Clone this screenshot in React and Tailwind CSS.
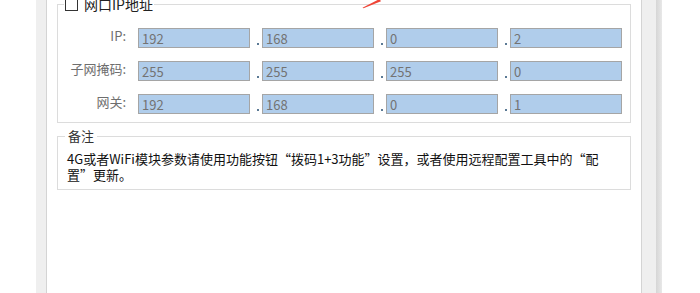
import React from "react";

const FONT = { fontFamily: '"Noto Sans CJK SC", "Noto Sans", sans-serif' };

function Row({ label, values }) {
  return (
    <div className="flex items-start h-[20px]">
      <div className="w-[68px] text-right text-[13px] leading-[14px] text-[#6e6e6e] pt-[1px]">{label}</div>
      <div className="ml-[12px] flex">
        {values.map((v, i) => (
          <React.Fragment key={i}>
            {i > 0 && (
              <div className="w-[12px] h-[20px] flex items-end justify-end pr-[3px] pb-[3px]">
                <div className="w-[2px] h-[2px] bg-[#5b7a95]" />
              </div>
            )}
            <div className="w-[112px] h-[20px] border border-[#a5a5a5] bg-[#b0cdeb] text-[#737373] text-[13px] leading-none pl-[3px] flex items-center">
              {v}
            </div>
          </React.Fragment>
        ))}
      </div>
    </div>
  );
}

export default function App() {
  return (
    <div className="relative flex w-[700px] h-[293px] bg-white overflow-hidden" style={FONT}>
      <div className="w-[36px] bg-white" />
      <div className="w-[10px] bg-[#efefef]" />
      <div className="w-[596px] border-l border-r border-[#d4d4d4] bg-white px-[10px]">
        <div className="relative mt-[4px] h-[119px] border border-[#dcdcdc] pt-[23px] flex flex-col gap-[13px]">
          <div className="absolute left-[6px] top-[-9px] flex items-center gap-[6px] bg-white px-[1px] h-[16px]">
            <div className="w-[13px] h-[13px] border border-[#333333] bg-white" />
            <span className="text-[14px] leading-[16px] text-[#222222]">网口IP地址</span>
          </div>
          <Row label="IP:" values={["192", "168", "0", "2"]} />
          <Row label="子网掩码:" values={["255", "255", "255", "0"]} />
          <Row label="网关:" values={["192", "168", "0", "1"]} />
        </div>
        <div className="relative mt-[13px] h-[54px] border border-[#dcdcdc] pt-[14px] pl-[9px]">
          <div className="absolute left-[7px] top-[-9px] bg-white px-[3px] text-[13px] leading-[16px] text-[#333333]">备注</div>
          <p className="text-[13px] leading-[16px] text-[#111111]">
            4G或者WiFi模块参数请使用功能按钮“拨码1+3功能”设置，或者使用远程配置工具中的“配
            <br />
            置”更新。
          </p>
        </div>
      </div>
      <div className="w-[14px] bg-[#efefef]" />
      <div className="w-[6px] bg-gradient-to-r from-[#d6d6d6] to-[#e8e8e8]" />
      <div className="flex-1 bg-white" />
      <svg className="absolute left-[360px] top-0" width="24" height="10" viewBox="0 0 24 10">
        <path d="M2.5 7.8 L19.5 -1 L21 1.2 L3.5 8.3 Z" fill="#ef4436" />
      </svg>
    </div>
  );
}
